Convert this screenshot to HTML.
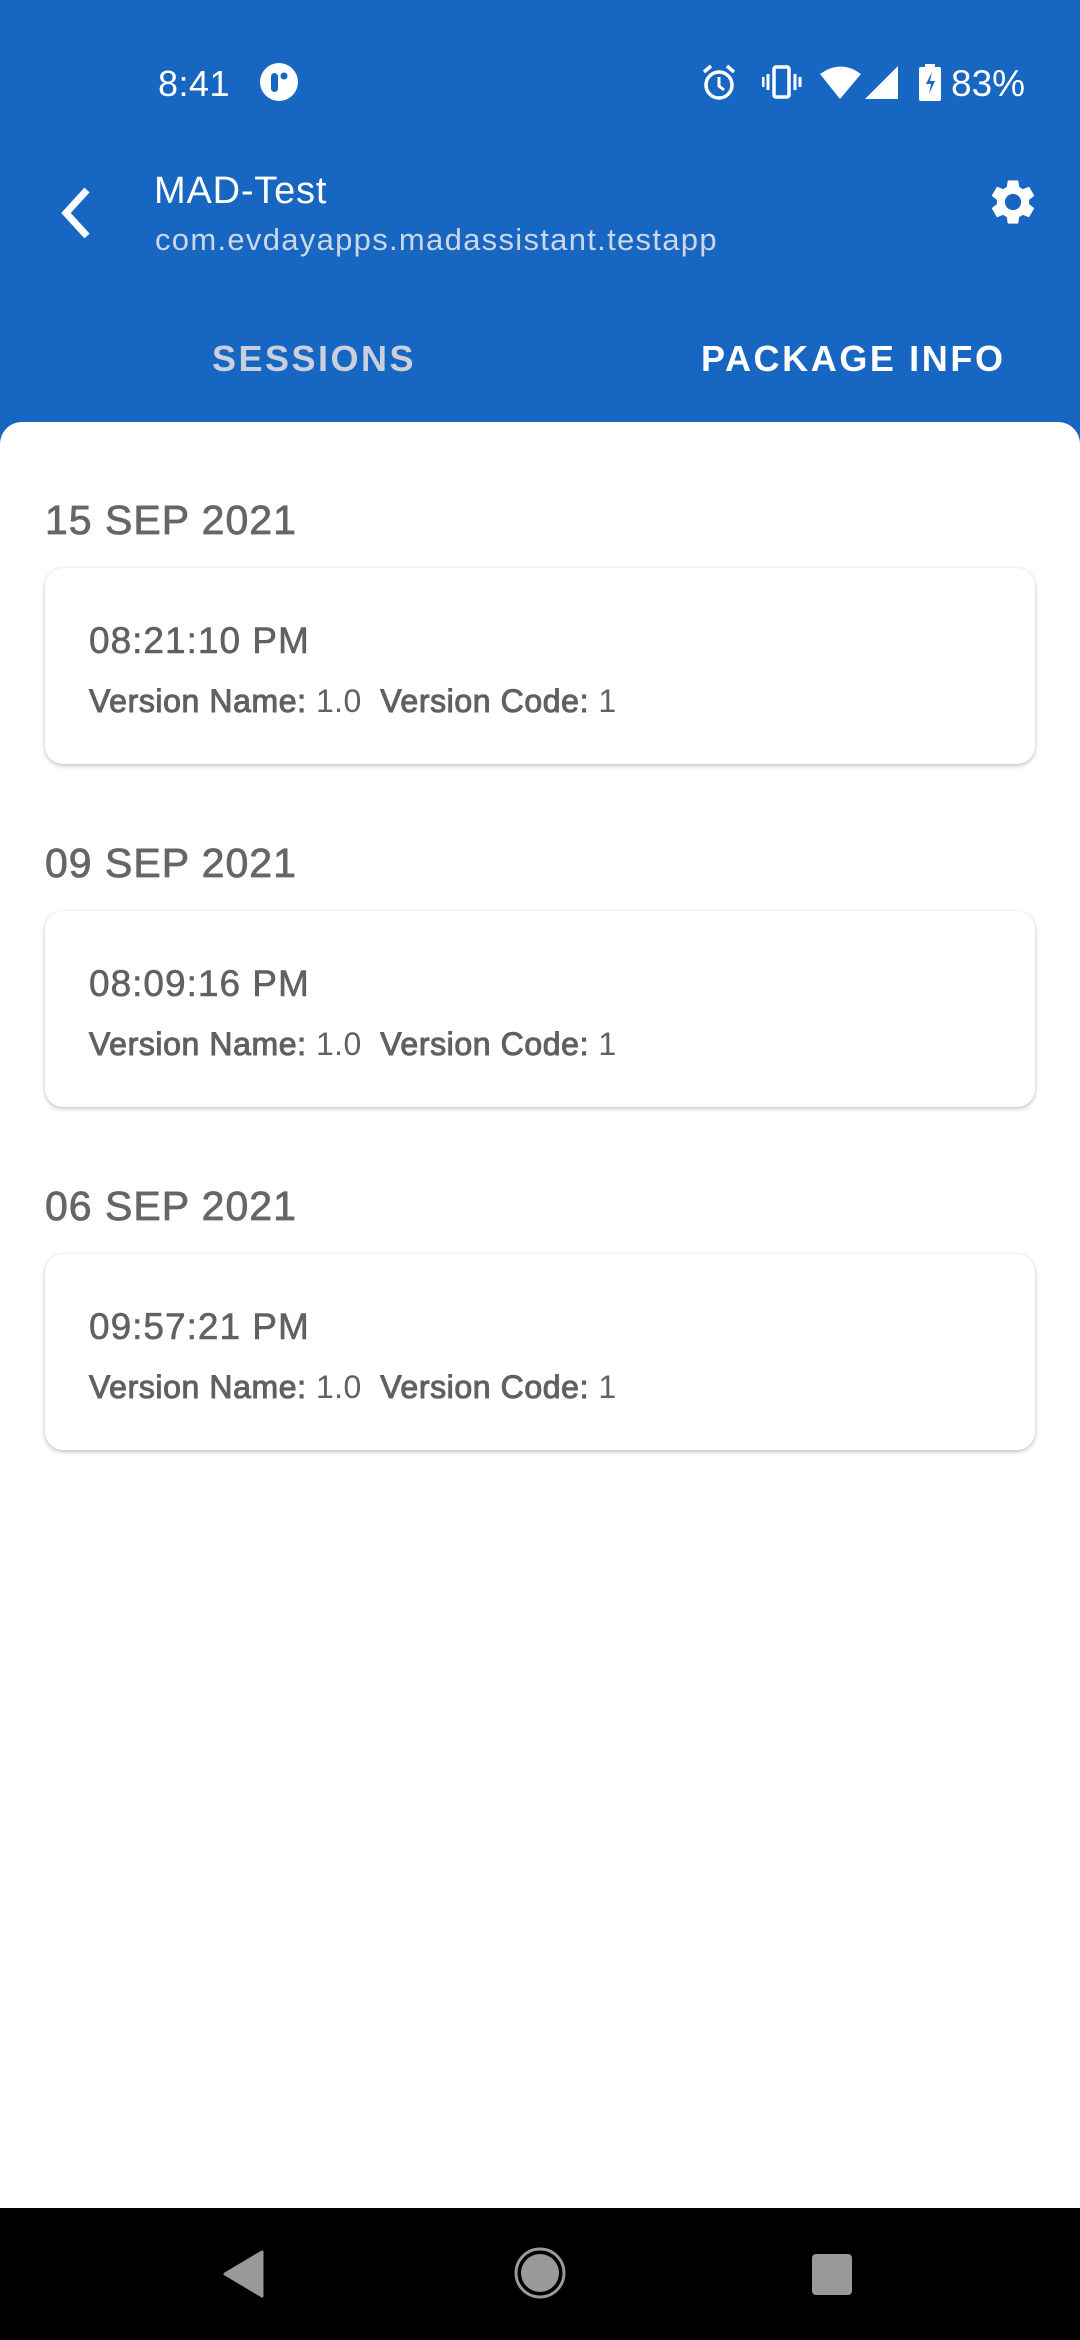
<!DOCTYPE html>
<html><head><meta charset="utf-8"><style>
*{margin:0;padding:0;box-sizing:border-box}
body{width:1080px;height:2340px;background:#fff;font-family:"Liberation Sans",sans-serif;position:relative;overflow:hidden}
.hdr{position:absolute;left:0;top:0;width:1080px;height:460px;background:#1766C1}
.sheet{position:absolute;left:0;top:422px;width:1080px;height:1790px;background:#fff;border-radius:22px 22px 0 0}
.abs{position:absolute;white-space:nowrap}
.date{font-size:41px;color:#666;left:45px;letter-spacing:1px;-webkit-text-stroke:0.8px #666}
.card{position:absolute;left:45px;width:990px;height:196px;background:#fff;border-radius:18px;box-shadow:0 2px 5px rgba(0,0,0,.22),0 0 2px rgba(0,0,0,.08)}
.card .t{position:absolute;left:44px;top:52px;font-size:37px;color:#616161;letter-spacing:1px;-webkit-text-stroke:0.6px #616161}
.card .v{position:absolute;left:44px;top:115px;font-size:32px;color:#616161;letter-spacing:0.4px}
.card .v b{font-weight:normal;-webkit-text-stroke:1px #5f5f5f;letter-spacing:0.6px}
.nav{position:absolute;left:0;top:2208px;width:1080px;height:132px;background:#000}
</style></head><body>
<div class="hdr"></div>
<div class="abs" style="left:158px;top:63px;font-size:36px;color:#fff;letter-spacing:0.5px">8:41</div>
<svg class="abs" style="left:260px;top:63px" width="38" height="38" viewBox="0 0 38 38"><circle cx="19" cy="19" r="19" fill="#fff"/><rect x="11" y="10" width="7" height="19" rx="3.5" fill="#1766C1"/><circle cx="24" cy="13" r="3.5" fill="#1766C1"/></svg>
<svg class="abs" style="left:700px;top:64px" width="40" height="38" viewBox="0 0 40 38"><circle cx="19" cy="21" r="13" fill="none" stroke="#fff" stroke-width="3.5"/><path d="M19 13v9l5 4" fill="none" stroke="#fff" stroke-width="3"/><path d="M4 8l7-6M34 8l-7-6" stroke="#fff" stroke-width="3.5"/></svg>
<svg class="abs" style="left:762px;top:65px" width="40" height="34" viewBox="0 0 40 34"><rect x="12" y="2" width="15" height="30" rx="2" fill="none" stroke="#fff" stroke-width="3.5"/><path d="M6 9v16M1 12v10M33 9v16M38 12v10" stroke="#fff" stroke-width="3"/></svg>
<svg class="abs" style="left:819px;top:64px" width="82" height="36" viewBox="0 0 82 36"><path d="M1 10Q22-5 42 10L21 35Z" fill="#fff"/><path d="M79 2V35H46Z" fill="#fff"/></svg>
<svg class="abs" style="left:919px;top:64px" width="22" height="37" viewBox="0 0 22 37"><rect x="6" y="0" width="10" height="4" fill="#fff"/><rect x="0" y="3" width="22" height="34" rx="2" fill="#fff"/><path d="M13 8l-6 12h5l-2 10 6-13h-5z" fill="#1766C1"/></svg>
<div class="abs" style="left:951px;top:63px;font-size:37px;color:#fff">83%</div>
<svg class="abs" style="left:55px;top:186px" width="40" height="54" viewBox="0 0 40 54"><path d="M32 4L11 27l21 23" fill="none" stroke="#fff" stroke-width="7"/></svg>
<div class="abs" style="left:154px;top:170px;font-size:38px;letter-spacing:0.8px;color:#fff">MAD-Test</div>
<div class="abs" style="left:155px;top:222px;font-size:31px;letter-spacing:1.3px;color:#cdd6e6">com.evdayapps.madassistant.testapp</div>
<svg class="abs" style="left:986px;top:175px" width="54" height="54" viewBox="0 0 24 24"><path fill="#fff" d="M19.14 12.94c.04-.3.06-.61.06-.94 0-.32-.02-.64-.07-.94l2.03-1.58a.49.49 0 0 0 .12-.61l-1.92-3.32a.49.49 0 0 0-.59-.22l-2.39.96c-.5-.38-1.03-.7-1.62-.94l-.36-2.54a.48.48 0 0 0-.48-.41h-3.84c-.24 0-.43.17-.47.41l-.36 2.54c-.59.24-1.13.57-1.62.94l-2.39-.96a.48.48 0 0 0-.59.22L2.74 8.87c-.12.21-.08.47.12.61l2.03 1.58c-.05.3-.09.63-.09.94s.02.64.07.94l-2.03 1.58a.49.49 0 0 0-.12.61l1.92 3.32c.12.22.37.29.59.22l2.39-.96c.5.38 1.03.7 1.62.94l.36 2.54c.05.24.24.41.48.41h3.84c.24 0 .44-.17.47-.41l.36-2.54c.59-.24 1.13-.56 1.62-.94l2.39.96c.22.08.47 0 .59-.22l1.92-3.32c.12-.22.07-.47-.12-.61l-2.01-1.58zM12 15.6A3.6 3.6 0 1 1 12 8.4a3.6 3.6 0 0 1 0 7.2z"/></svg>
<div class="abs" style="left:212px;top:338px;font-size:36px;font-weight:bold;letter-spacing:2.5px;color:#c9cfdb">SESSIONS</div>
<div class="abs" style="left:701px;top:338px;font-size:36px;font-weight:bold;letter-spacing:2.6px;color:#fff">PACKAGE INFO</div>
<div class="sheet"></div>

<div class="abs date" style="top:497px">15 SEP 2021</div>
<div class="card" style="top:568px"><div class="t">08:21:10 PM</div><div class="v"><b>Version Name:</b> 1.0&nbsp; <b>Version Code:</b> 1</div></div>
<div class="abs date" style="top:840px">09 SEP 2021</div>
<div class="card" style="top:911px"><div class="t">08:09:16 PM</div><div class="v"><b>Version Name:</b> 1.0&nbsp; <b>Version Code:</b> 1</div></div>
<div class="abs date" style="top:1183px">06 SEP 2021</div>
<div class="card" style="top:1254px"><div class="t">09:57:21 PM</div><div class="v"><b>Version Name:</b> 1.0&nbsp; <b>Version Code:</b> 1</div></div>

<div class="nav">
<svg class="abs" style="left:222px;top:42px" width="44" height="48" viewBox="0 0 44 48"><path d="M40 2L3 24l37 22z" fill="#999" stroke="#999" stroke-width="3" stroke-linejoin="round"/></svg>
<svg class="abs" style="left:514px;top:39px" width="52" height="52" viewBox="0 0 52 52"><circle cx="26" cy="26" r="24" fill="none" stroke="#999" stroke-width="3"/><circle cx="26" cy="26" r="19" fill="#999"/></svg>
<div class="abs" style="left:812px;top:46px;width:40px;height:41px;background:#999;border-radius:4px"></div>
</div>
</body></html>
